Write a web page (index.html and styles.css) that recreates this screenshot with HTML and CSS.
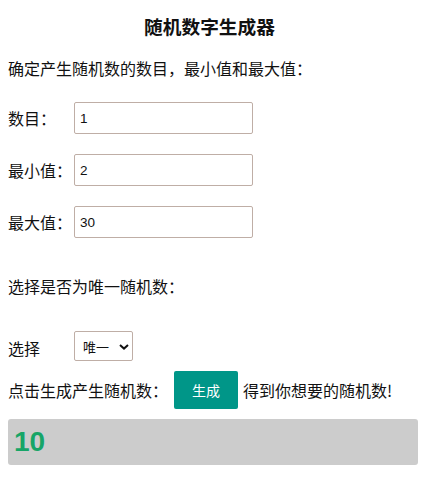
FILE: index.html
```html
<!DOCTYPE html>
<html lang="zh">
<head>
    <meta charset="UTF-8">
    <meta name="viewport" content="width=device-width, initial-scale=1.0">
    <title>随机数字生成器</title>
    <link rel="stylesheet" href="styles.css">
</head>
<body>
    <h3 class="title">随机数字生成器</h3>
    <p class="intro">确定产生随机数的数目，最小值和最大值：</p>

    <div class="field">
        <label class="label" for="count">数目：</label>
        <input class="num_input" id="count" type="text" value="1">
    </div>
    <div class="field">
        <label class="label" for="min">最小值：</label>
        <input class="num_input" id="min" type="text" value="2">
    </div>
    <div class="field">
        <label class="label" for="max">最大值：</label>
        <input class="num_input" id="max" type="text" value="30">
    </div>

    <p class="intro intro_unique">选择是否为唯一随机数：</p>

    <div class="field field_select">
        <label class="label" for="unique">选择</label>
        <span class="select_wrap">
            <select class="unique_select" id="unique">
                <option>唯一</option>
                <option>不唯一</option>
            </select>
            <svg class="chevron" width="10" height="6" viewBox="0 0 10 6">
                <path d="M1 1 L5 4.6 L9 1" fill="none" stroke="#111" stroke-width="2"/>
            </svg>
        </span>
    </div>

    <div class="action_row">
        <span>点击生成产生随机数：</span>
        <button class="gen_button" type="button">生成</button>
        <span>得到你想要的随机数!</span>
    </div>

    <div class="result">10</div>
</body>
</html>
```

FILE: styles.css
```css
body{
    margin: 0 8px;
    font-family: "Noto Sans CJK SC", "Liberation Sans", sans-serif;
    font-size: 16px;
    color: #111;
}
.title{
    margin: 14px 0 0 0;
    padding-right: 7px;
    font-size: 18.7px;
    line-height: 24px;
    text-align: center;
}
.intro{
    margin: 18px 0 0 0;
    line-height: 24px;
}
.intro_unique{
    margin-top: 36px;
}
.field{
    display: flex;
    align-items: center;
    margin-top: 20px;
}
.intro + .field{
    margin-top: 22px;
}
.label{
    width: 66px;
    line-height: 24px;
}
.num_input{
    box-sizing: border-box;
    width: 179px;
    height: 32px;
    padding: 0 5px;
    border: 1px solid #bfaea6;
    border-radius: 2px;
    font-family: "Liberation Sans", sans-serif;
    font-size: 13.5px;
    color: #111;
    background: #fff;
}
.intro + .field_select{
    margin-top: 33px;
    align-items: flex-end;
}
.field_select .label{
    padding-bottom: 1px;
}
.select_wrap{
    position: relative;
    display: inline-block;
}
.unique_select{
    -webkit-appearance: none;
    appearance: none;
    box-sizing: border-box;
    width: 59px;
    height: 30px;
    padding: 0 0 0 8px;
    border: 1px solid #bfaea6;
    border-radius: 2px;
    background: #fff;
    font-family: "Noto Sans CJK SC", sans-serif;
    font-size: 13px;
    color: #111;
}
.chevron{
    position: absolute;
    left: 45px;
    top: 13px;
    pointer-events: none;
}
.action_row{
    display: flex;
    align-items: center;
    margin-top: 10px;
    line-height: 24px;
}
.gen_button{
    width: 64px;
    height: 38px;
    margin: 0 5px 0 6px;
    border: none;
    border-radius: 2px;
    background: #009688;
    color: #fff;
    font-family: "Noto Sans CJK SC", sans-serif;
    font-size: 14px;
}
.result{
    box-sizing: border-box;
    height: 46px;
    margin-top: 10px;
    padding: 0 6px;
    background: #cccccc;
    border-radius: 3px;
    font-family: "Liberation Sans", sans-serif;
    font-size: 28px;
    font-weight: bold;
    line-height: 46px;
    color: #17a567;
}
```
